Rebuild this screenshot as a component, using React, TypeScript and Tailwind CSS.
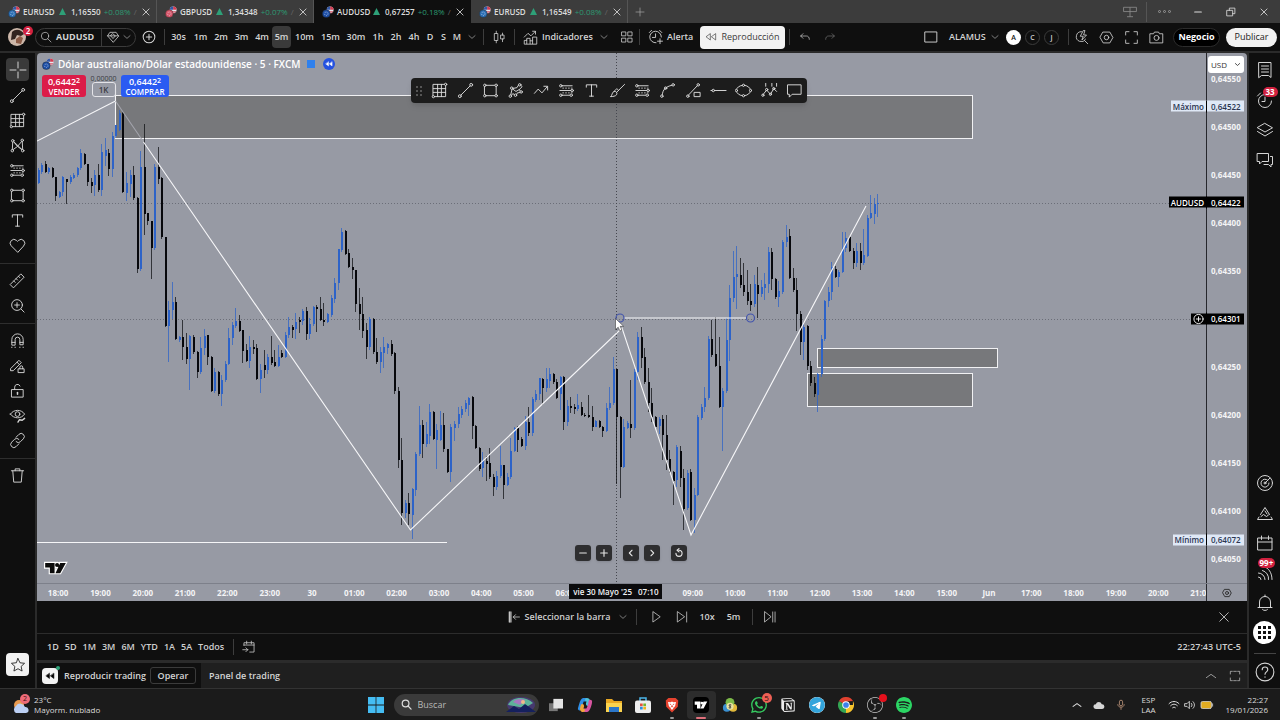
import type { ReactNode } from "react";
import { clsx } from "clsx";
import {
  SiBrave,
  SiNotion,
  SiObsstudio,
  SiSpotify,
  SiTelegram,
  SiWhatsapp,
} from "react-icons/si";

interface IconProps {
  size?: string;
  className?: string;
  children: ReactNode;
}

// Base para todos los iconos de línea (caja de 18x18)
function Icon({ size = "size-[18px]", className, children }: IconProps) {
  return (
    <svg
      viewBox="0 0 18 18"
      fill="none"
      stroke="currentColor"
      strokeWidth="1"
      strokeLinecap="round"
      strokeLinejoin="round"
      className={clsx("shrink-0", size, className)}
      aria-hidden="true"
    >
      {children}
    </svg>
  );
}

const icons: Record<string, ReactNode> = {
  cross: <path d="M9 1v6M9 11v6M1 9h6M11 9h6" />,
  trend: (
    <>
      <circle cx="3" cy="15" r="1.5" />
      <circle cx="15" cy="3" r="1.5" />
      <path d="M4.2 13.8 13.8 4.2" />
    </>
  ),
  grid: (
    <>
      <path d="M2.5 2.5h13v13h-13zM2.5 7h13M2.5 11h13M7 2.5v13M11 2.5v13" />
      <circle cx="2.5" cy="15.5" r="1.2" fill="#111" />
      <circle cx="15.5" cy="2.5" r="1.2" fill="#111" />
    </>
  ),
  pattern: (
    <>
      <path d="M3.5 14 4 4l5 6 5-6 .5 10L9 10l-5.500 4M4 4l10.500 10" />
      <circle cx="3.500" cy="14.500" r="1.300" fill="#111" />
      <circle cx="4" cy="4" r="1.300" fill="#111" />
      <circle cx="14" cy="3.500" r="1.300" fill="#111" />
      <circle cx="14.500" cy="14.500" r="1.300" fill="#111" />
    </>
  ),
  fib: (
    <>
      <path d="M4.500 4H15M2 9h11.500M4.500 14h8" />
      <path d="M5 6.500h10M5 11.500h10" strokeDasharray="1 2" strokeWidth=".8" />
      <circle cx="3" cy="4" r="1.300" />
      <circle cx="15" cy="9" r="1.300" />
      <circle cx="3" cy="14" r="1.300" />
      <circle cx="14" cy="14" r="1.300" fill="#111" />
    </>
  ),
  rect: (
    <>
      <path d="M3 3.500h12v11H3z" />
      <circle cx="3" cy="3.500" r="1.300" fill="#111" />
      <circle cx="15" cy="3.500" r="1.300" fill="#111" />
      <circle cx="3" cy="14.500" r="1.300" fill="#111" />
      <circle cx="15" cy="14.500" r="1.300" fill="#111" />
    </>
  ),
  text: <path d="M3.500 5.500V3h11v2.500M9 3v12M7 15h4" />,
  heart: (
    <path d="M9 16 2.300 9.300a4 4 0 0 1 5.600-5.700L9 4.700l1.100-1.100a4 4 0 0 1 5.600 5.700z" />
  ),
  ruler: <path d="m1.500 13 11-11 3.500 3.500-11 11zM5 9.500l1.500 1.500M7.500 7l1.500 1.500M10 4.500 11.500 6" />,
  zoomIn: (
    <>
      <circle cx="8.500" cy="8.500" r="5.700" />
      <path d="m12.800 12.800 3.200 3.200M8.500 6v5M6 8.500h5" />
    </>
  ),
  magnet: (
    <path d="M3 13.500V8a6 6 0 0 1 12 0v5.500h-3.500V8a2.500 2.500 0 0 0-5 0v5.500zM3 11h3.500M11.500 11H15M3 16v.5M6.500 16v.5M11.500 16v.5M15 16v.5" />
  ),
  pencilLock: (
    <path d="M2 12 10.500 3.500 13 6l-8.500 8.500H2zM8.500 5.500 11 8M10 12.500h6v4h-6zM11.500 12.500v-1.700a1.500 1.500 0 0 1 3 0v1.700" />
  ),
  lock: (
    <>
      <path d="M3 8h12v8H3zM6 8V5.500a3 3 0 0 1 5.700-1.300" />
      <path d="M9 11v2" strokeWidth="1.600" />
    </>
  ),
  eye: (
    <>
      <path d="M1.500 7.500c3.500-5.300 11.500-5.300 15 0-3.500 5.300-11.500 5.300-15 0z" />
      <circle cx="9" cy="7.500" r="2.500" />
      <path d="m9.500 16 1.500-2.500 3 .5 2.500-2" strokeWidth="1.500" />
    </>
  ),
  link: (
    <path d="m7.500 5.500 3-3a3.200 3.200 0 0 1 4.700 4.700l-3 3a3.200 3.200 0 0 1-4.700 0M10.500 12.500l-3 3a3.200 3.200 0 0 1-4.700-4.700l3-3a3.200 3.200 0 0 1 4.700 0" />
  ),
  trash: <path d="M2.500 4h13M4 4l1 12h8l1-12M6.500 4V2h5v2" />,
  star: (
    <path d="m9 1.700 2.200 4.800 5.200.6-3.900 3.500 1.100 5.200L9 13.200l-4.600 2.600 1.100-5.200L1.600 7.100l5.200-.6z" />
  ),
  search: (
    <>
      <circle cx="7.500" cy="7.500" r="5.500" />
      <path d="m11.500 11.500 5 5" />
    </>
  ),
  gem: <path d="m9 15.500-7-8L5 3h8l3 4.500zM2 7.500h14M6 7.500 9 11l3-3.500L9 5z" />,
  down: <path d="m3.500 6.500 5.500 5 5.500-5" />,
  up: <path d="m2 11.500 7-5 7 5" />,
  left: <path d="m11 4-5 5 5 5" />,
  right: <path d="m7 4 5 5-5 5" />,
  plus: <path d="M9 3v12M3 9h12" />,
  minus: <path d="M3 9h12" />,
  close: <path d="m3.500 3.500 11 11M14.500 3.500l-11 11" />,
  plusCircle: (
    <>
      <circle cx="9" cy="9" r="7.500" />
      <path d="M9 5.500v7M5.500 9h7" />
    </>
  ),
  candles: <path d="M3.500 4.500h4v9h-4zM5.500 1.500v3M5.500 13.500v3M11.500 6.500h4v5h-4zM13.500 4v2.500M13.500 11.500V15" />,
  indicators: (
    <path d="M1.500 16.500v-4h3v-2.500h4V13h3V8.500h5v8zM4.500 16.500V12M8.500 16.500V13M11.500 16.500V13M1.500 8.500 6 4l3.500 3L15 1.500M11.500 1.500H15V5" />
  ),
  layouts: (
    <path d="M2.500 2.500h5v5h-5zM10.500 2.500h5v5h-5zM2.500 10.500h5v5h-5zM10.500 10.500h5v5h-5z" />
  ),
  alarm: (
    <path d="M15 9A6.500 6.500 0 1 0 9 15.500M8.500 5.500v4H5M1.500 4 4 1.500M13 1.500 15.500 4M13.500 11v5.500M10.700 13.700h5.600" />
  ),
  rewind: <path d="M8 4.500v9L2 9zM16 4.500v9L10 9z" />,
  undo: <path d="M6 4 2.500 7.500 6 11M2.500 7.500H11c3 0 4.500 2 4.500 5" />,
  redo: <path d="m12 4 3.500 3.500L12 11M15.500 7.500H7c-3 0-4.500 2-4.500 5" />,
  window: <path d="M1.500 2.500h15v13h-15z" />,
  quick: (
    <path d="M9 2a6 6 0 1 0 5 9M12.500 12.500l4 4M11 1 7.500 7.500H11L9.500 12 15 6h-3.500L13 1z" />
  ),
  hex: (
    <>
      <path d="M5 2.500h8L16.700 9 13 15.500H5L1.300 9z" />
      <circle cx="9" cy="9" r="2.700" />
    </>
  ),
  fullscreen: <path d="M2 6V2h4M12 2h4v4M16 12v4h-4M6 16H2v-4" />,
  camera: (
    <>
      <path d="M1.500 4.500h4l1-2h5l1 2h4v11h-15z" />
      <circle cx="9" cy="9.500" r="3" />
    </>
  ),
  list: <path d="M3 1.500h12v15l-2.500-2H5.500L3 16.500zM5.500 5h7M5.500 8h7M5.500 11h7" />,
  clock: <path d="M15.500 10A6.500 6.500 0 1 1 9 3.500M9 6v4.500H6M1.500 5 4.500 2" />,
  layers: <path d="m9 2.500 7.500 4.300L9 11 1.500 6.800zM1.500 10.500 9 15l7.500-4.500" />,
  chat: <path d="M1.500 2.500h11v8H6l-2.500 2.500v-2.500h-2zM14.500 5.500h2v8h-1.500V16l-2.500-2.500H8" />,
  target: (
    <>
      <circle cx="9" cy="9" r="7.500" />
      <path d="M12 6.500A4 4 0 1 0 13 9M9 9l5-5" />
      <circle cx="9" cy="9" r="1" />
    </>
  ),
  idea: <path d="M4.500 10.500 9 3.500l4.500 7M3 13l-1.500 2.500h15L15 13M5 12.500l2.500-2 3 2 2-1.500M9 7l2 3" />,
  calendar: <path d="M2 4h14v12H2zM2 8h14M5.500 2v3.500M12.500 2v3.500" />,
  feed: <path d="M2.500 13a2.500 2.500 0 0 1 2.500 2.500M2.500 9A6.500 6.500 0 0 1 9 15.500M6.500 6.500a8 8 0 0 1 6 9M10 3.500c4 2 6 7 6 12" />,
  bell: <path d="M2 13.500h14M3.500 13.500V8a5.500 5.500 0 0 1 11 0v5.500M6.500 15.500c1 1.300 4 1.300 5 0M9 1v1.500" />,
  help: (
    <>
      <circle cx="9" cy="9" r="8" />
      <path d="M6.500 7c0-3.300 5-3.300 5 0 0 2-2.500 1.800-2.500 4M9 13.300v.4" />
    </>
  ),
  play: <path d="M5 2.500v13L14 9z" />,
  step: <path d="M3 2.500v13L12 9zM15 2.500v13" />,
  toEnd: <path d="M2 2.500v13L10 9zM12.500 2.500v13M15.500 2.500v13" />,
  reset: <path d="M9 4a5.500 5.500 0 1 1-5.500 5.500M9 1 5.500 4 9 7" />,
  goto: <path d="M2.500 7V3.500h13v12H10M2.500 6.500h13M6 1.500v3.500M12 1.500v3.500M1 12.500h6.500M5 10l2.500 2.500L5 15" />,
  pitchfork: (
    <>
      <path d="M3.500 15.500 5.500 7l5-1 2.500-4 3 3-3 3 2 3-4 .5-1.500 3-3-2zM5.500 7l4 3 3.500-2" />
      <circle cx="3.500" cy="15" r="1.300" fill="#1c1c1c" />
      <circle cx="5" cy="6.500" r="1.300" fill="#1c1c1c" />
      <circle cx="13.500" cy="3" r="1.300" fill="#1c1c1c" />
      <circle cx="15" cy="10.500" r="1.300" fill="#1c1c1c" />
      <circle cx="9" cy="14" r="1.300" fill="#1c1c1c" />
    </>
  ),
  zigzag: <path d="m1.500 12 4-4.500 4 4L15 5M11.500 4.500H15.500V8.500" />,
  brush: <path d="M2 15.500c1.500-1 1-5 3.500-5.500S9 12 8 13.500s-4 2-6 2zM8 11l8.500-8.500M5.500 10C8 6 9 7 10 9" />,
  curve: (
    <>
      <path d="M3.500 13.500C4 8 7 5 13.500 3.500" />
      <circle cx="3" cy="15" r="1.300" />
      <circle cx="7" cy="6.500" r="1.300" />
      <circle cx="15" cy="3" r="1.300" />
    </>
  ),
  trendBox: (
    <>
      <path d="M3.500 14 13 4M10 11h6v4.500h-6z" />
      <circle cx="3" cy="15" r="1.300" />
      <circle cx="14" cy="3" r="1.300" />
    </>
  ),
  ray: (
    <>
      <path d="M1 9h1M5 9h12" />
      <circle cx="3.500" cy="9" r="1.300" />
    </>
  ),
  ellipse: (
    <>
      <ellipse cx="9" cy="9" rx="7.500" ry="5.500" />
      <circle cx="1.500" cy="9" r="1.200" fill="#1c1c1c" />
      <circle cx="16.500" cy="9" r="1.200" fill="#1c1c1c" />
      <circle cx="9" cy="3.500" r="1.200" fill="#1c1c1c" />
      <circle cx="9" cy="14.500" r="1.200" fill="#1c1c1c" />
    </>
  ),
  waves: (
    <>
      <path d="m2 13.500 4-5 4 4.500 3.500-6 3 3M5 1.500v3M11.500 1.500v3M16.500 1.500v3" />
      <circle cx="2" cy="14" r="1.200" />
      <circle cx="6" cy="8" r="1.200" />
      <circle cx="10" cy="13" r="1.200" />
      <circle cx="13.500" cy="7" r="1.200" />
    </>
  ),
  note: <path d="M2 3h14v10H6.500L3.500 16v-3H2z" />,
};

/* ---------- Pestañas ---------- */

const tabs = [
  { symbol: "EURUSD", price: "1,16550", change: "+0.08%", flag: "#2b6fb5" },
  { symbol: "GBPUSD", price: "1,34348", change: "+0.07%", flag: "#d9576b" },
  { symbol: "AUDUSD", price: "0,67257", change: "+0.18%", flag: "#1d4fa8", active: true },
  { symbol: "EURUSD", price: "1,16549", change: "+0.08%", flag: "#2b6fb5" },
];

function PairFlag({ color }: { color: string }) {
  return (
    <svg viewBox="0 0 14 14" className="size-3 shrink-0" aria-hidden="true">
      <circle cx="9.500" cy="4.500" r="4" fill="#e8e8ee" />
      <path d="M9.500.5a4 4 0 0 1 4 4h-4z" fill="#d43c50" />
      <path d="M6 6.500h7M7 8h5" stroke="#d43c50" strokeWidth=".8" />
      <path d="M5.500 4.500a4 4 0 0 1 4-4v4z" fill="#3559a8" />
      <circle cx="5" cy="9" r="4.500" fill={color} stroke="#222" strokeWidth=".5" />
      <circle cx="5" cy="9" r="2" fill="none" stroke="#dfe6f2" strokeWidth=".8" strokeDasharray="1 1.200" />
    </svg>
  );
}

function TabBar() {
  return (
    <header className="flex h-[23px] shrink-0 items-stretch bg-[#3c3c3c] text-[8px] text-[#dcdcdc]">
      {tabs.map((tab, i) => (
        <div
          key={i}
          className={clsx(
            "flex w-[157px] shrink-0 items-center border-r pr-[5px] pl-2",
            tab.active ? "border-[#0f0f0f] bg-[#0f0f0f]" : "border-[#555]"
          )}
        >
          <button className="flex flex-1 items-center gap-[3px] whitespace-nowrap">
            <PairFlag color={tab.flag} />
            <span className="w-[33px] text-left font-semibold">{tab.symbol}</span>
            <svg viewBox="0 0 8 8" className="mr-0.5 size-[7px] shrink-0 fill-[#2ea078]" aria-hidden="true">
              <path d="m4 0 4 8H0z" />
            </svg>
            <span className="font-semibold">{tab.price}</span>
            <span className="text-[#2c9a72]">{tab.change}</span>
            <span className="text-[#666]">/</span>
          </button>
          <button aria-label="Cerrar pestaña">
            <Icon size="size-2.5" className="stroke-[1.5]">{icons.close}</Icon>
          </button>
        </div>
      ))}
      <button aria-label="Nueva pestaña" className="flex w-6 items-center justify-center text-[#aaa]">
        <Icon size="size-3">{icons.plus}</Icon>
      </button>
      <div className="ml-auto flex items-center">
        <button aria-label="Ventanas" className="flex w-8 justify-center text-[#8a8a8a]">
          <svg viewBox="0 0 18 14" className="h-3 w-4" fill="none" stroke="currentColor">
            <path d="M1.500 1.500h15v5h-15zM9 1.500v11M5.500 12.500h7" />
          </svg>
        </button>
        <span className="h-5 w-px bg-[#555]" />
        <button aria-label="Más" className="flex w-[34px] justify-center gap-[2px]">
          {[0, 1, 2].map((n) => (
            <span key={n} className="size-[3px] rounded-full border border-[#999]" />
          ))}
        </button>
        <button aria-label="Minimizar" className="flex w-[33px] justify-center">
          <Icon size="size-2.5" className="stroke-[2]">{icons.minus}</Icon>
        </button>
        <button aria-label="Restaurar" className="flex w-[33px] justify-center">
          <Icon size="size-2.5" className="stroke-[1.5]">
            <path d="M2 6h10v10H2zM6 6V2h10v10h-4" />
          </Icon>
        </button>
        <button aria-label="Cerrar" className="flex w-[33px] justify-center">
          <Icon size="size-2.5" className="stroke-[1.5]">{icons.close}</Icon>
        </button>
      </div>
    </header>
  );
}

/* ---------- Barra superior ---------- */

const intervals = [
  { label: "30s", width: "w-[23px]" },
  { label: "1m", width: "w-[21px]" },
  { label: "2m", width: "w-[20px]" },
  { label: "3m", width: "w-[21px]" },
  { label: "4m", width: "w-[20px]" },
  { label: "5m", width: "w-[19px]" },
  { label: "10m", width: "w-[27px]" },
  { label: "15m", width: "w-[25px]" },
  { label: "30m", width: "w-[26px]" },
  { label: "1h", width: "w-[18px]" },
  { label: "2h", width: "w-[18px]" },
  { label: "4h", width: "w-[18px]" },
  { label: "D", width: "w-[14px]" },
  { label: "S", width: "w-[13px]" },
  { label: "M", width: "w-[14px]" },
];

function Separator() {
  return <span className="h-4 w-px shrink-0 bg-[#3d3d3d]" />;
}

function TopToolbar() {
  return (
    <div className="flex h-7 shrink-0 items-center overflow-hidden bg-[#0f0f0f] text-[9px] font-semibold text-[#d4d4d4]">
      <button aria-label="Perfil" className="relative ml-2 size-[18px] shrink-0 rounded-full">
        <svg viewBox="0 0 18 18" className="size-[18px]" aria-hidden="true">
          <circle cx="9" cy="9" r="9" fill="#cdb8aa" />
          <path d="M4 4c4-4 10-2 12 2l-3 2-4-1-2 4-4 1z" fill="#33241f" />
          <path d="m8 11 4-3 3 2-2 6-5-1z" fill="#8d5d48" />
        </svg>
        <span className="absolute -top-0.5 left-[15px] flex size-2.5 items-center justify-center rounded-full bg-[#d2213f] text-[8px] leading-none text-white">
          2
        </span>
      </button>
      <div className="ml-[9px] flex h-[19px] shrink-0 items-center rounded-full border border-[#3b3b3b]">
        <button className="flex items-center gap-1 pl-1">
          <Icon size="size-3">{icons.search}</Icon>
          <span className="w-[45px] text-left font-bold">AUDUSD</span>
        </button>
        <span className="h-[17px] w-px bg-[#3b3b3b]" />
        <button aria-label="Gema" className="flex w-[33px] items-center justify-center gap-0.5">
          <Icon size="size-3.5">{icons.gem}</Icon>
          <Icon size="size-2.5">{icons.down}</Icon>
        </button>
      </div>
      <button aria-label="Comparar" className="mr-2 ml-1.5 shrink-0">
        <Icon size="size-3.5" className="stroke-[1.3]">{icons.plusCircle}</Icon>
      </button>
      <Separator />
      <div className="ml-0.5 flex items-center">
        {intervals.map(({ label, width }) => (
          <button
            key={label}
            className={clsx("h-[22px] shrink-0 rounded", width, label === "5m" && "bg-[#3a3a3a]")}
          >
            {label}
          </button>
        ))}
        <button aria-label="Más intervalos" className="flex w-4 justify-center">
          <Icon size="size-2.5">{icons.down}</Icon>
        </button>
      </div>
      <span className="w-[3px]" />
      <Separator />
      <button aria-label="Velas" className="flex w-[30px] shrink-0 justify-center">
        <Icon size="size-3.5">{icons.candles}</Icon>
      </button>
      <Separator />
      <button className="flex shrink-0 items-center gap-1 pl-2">
        <Icon size="size-[15px]">{icons.indicators}</Icon>
        <span className="w-[52px] text-left">Indicadores</span>
      </button>
      <button aria-label="Favoritos" className="flex w-5 justify-center">
        <Icon size="size-2.5">{icons.down}</Icon>
      </button>
      <button aria-label="Plantillas" className="flex w-[25px] justify-center">
        <Icon size="size-3.5">{icons.layouts}</Icon>
      </button>
      <Separator />
      <button className="flex shrink-0 items-center gap-[3px] pl-2">
        <Icon size="size-4">{icons.alarm}</Icon>
        <span className="w-[33px] text-left">Alerta</span>
      </button>
      <button className="flex h-[23px] w-[85px] shrink-0 items-center justify-center gap-1 rounded bg-[#f2f2f2] font-medium text-[#3c3c3c]">
        <Icon size="size-3">{icons.rewind}</Icon>
        Reproducción
      </button>
      <span className="w-1" />
      <Separator />
      <button aria-label="Deshacer" className="flex w-[30px] justify-center">
        <Icon size="size-3">{icons.undo}</Icon>
      </button>
      <button aria-label="Rehacer" className="flex w-5 justify-center text-[#777]">
        <Icon size="size-3">{icons.redo}</Icon>
      </button>

      <div className="ml-auto flex shrink-0 items-center pr-[3px]">
        <button aria-label="Diseño" className="flex w-[25px] justify-start">
          <Icon size="size-3.5" className="stroke-[1.2]">{icons.window}</Icon>
        </button>
        <button className="w-[37px] text-left">ALAMUS</button>
        <button aria-label="Diseños guardados" className="flex w-[18px] justify-center">
          <Icon size="size-2.5">{icons.down}</Icon>
        </button>
        {["A", "C", "J"].map((letter) => (
          <button
            key={letter}
            className={clsx(
              "mx-0.5 flex size-[15px] items-center justify-center rounded-full text-[7px] leading-none",
              letter === "A" ? "bg-white text-[#111]" : "border border-[#3b3b3b]"
            )}
          >
            {letter}
          </button>
        ))}
        <span className="w-[7px]" />
        <Separator />
        {["quick", "hex", "fullscreen", "camera"].map((name) => (
          <button key={name} aria-label={name} className="flex w-[25px] justify-center">
            <Icon size="size-[15px]">{icons[name]}</Icon>
          </button>
        ))}
        <button className="ml-1 h-[19px] w-[47px] rounded-full border border-[#2c2c2c] bg-black font-bold text-white">
          Negocio
        </button>
        <button className="ml-1.5 h-[19px] w-[51px] rounded-full bg-[#f2f2f2] font-medium text-[#222]">
          Publicar
        </button>
      </div>
    </div>
  );
}

/* ---------- Barras laterales ---------- */

const drawingGroups = [
  ["trend", "grid", "pattern", "fib", "rect", "text", "heart"],
  ["ruler", "zoomIn"],
  ["magnet", "pencilLock", "lock", "eye", "link"],
  ["trash"],
];

function DrawingSidebar() {
  return (
    <nav className="flex w-[35px] shrink-0 flex-col items-center bg-[#0f0f0f] pt-[5px] text-[#d4d4d4]">
      <button aria-label="Cruz" className="mb-0.5 flex size-[23px] items-center justify-center rounded bg-[#3a3a3a]">
        <Icon>{icons.cross}</Icon>
      </button>
      {drawingGroups.map((group, i) => (
        <div
          key={i}
          className={clsx(
            "flex w-full flex-col items-center",
            i > 0 && "mt-[5px] border-t border-[#2e2e2e] pt-1"
          )}
        >
          {group.map((name) => (
            <button key={name} aria-label={name} className="flex h-[25px] items-center">
              <Icon size="size-[17px]">{icons[name]}</Icon>
            </button>
          ))}
        </div>
      ))}
      <button
        aria-label="Favoritos"
        className="mt-auto mb-3 flex size-[23px] items-center justify-center rounded bg-[#f2f2f2] text-[#222]"
      >
        <Icon size="size-4">{icons.star}</Icon>
      </button>
    </nav>
  );
}

function WidgetSidebar() {
  return (
    <aside className="flex w-[31px] shrink-0 flex-col items-center bg-[#0f0f0f] pt-0.5 text-[#d4d4d4]">
      {["list", "clock", "layers", "chat"].map((name) => (
        <button key={name} aria-label={name} className="relative my-[6px] shrink-0">
          <Icon>{icons[name]}</Icon>
          {name === "clock" && (
            <span className="absolute -top-1 left-[7px] rounded-full bg-[#d2213f] px-[3px] text-[8px] leading-[10px] font-bold text-white">
              33
            </span>
          )}
        </button>
      ))}
      <div className="mt-auto flex flex-col items-center">
        {["target", "idea", "calendar", "feed", "bell"].map((name) => (
          <button key={name} aria-label={name} className="relative my-[6px] shrink-0">
            <Icon>{icons[name]}</Icon>
            {name === "feed" && (
              <span className="absolute -top-1.5 left-0.5 rounded-full bg-[#d2213f] px-0.5 text-[8px] leading-[10px] font-bold text-white">
                99+
              </span>
            )}
          </button>
        ))}
        <button
          aria-label="Productos"
          className="my-[3px] flex size-[23px] items-center justify-center rounded-full bg-white text-[#111]"
        >
          <svg viewBox="0 0 13 13" className="size-[13px]" fill="currentColor" aria-hidden="true">
            <path d="M0 0h3v3H0zM5 0h3v3H5zM10 0h3v3h-3zM0 5h3v3H0zM5 5h3v3H5zM10 5h3v3h-3zM0 10h3v3H0zM5 10h3v3H5zM10 10h3v3h-3z" />
          </svg>
        </button>
        <span className="mt-1.5 h-px w-[22px] bg-[#444]" />
        <button aria-label="Ayuda" className="mt-2 mb-1.5">
          <Icon size="size-5">{icons.help}</Icon>
        </button>
      </div>
    </aside>
  );
}

/* ---------- Gráfico ---------- */

// Velas de 5 minutos: máximo, techo del cuerpo, base del cuerpo, mínimo (1 = alcista)
const candles: number[][] = [
  [168, 170, 183, 184, 1], [163, 165, 172, 174, 1], [161, 164, 172, 173, 0], [167, 168, 172, 174, 1],
  [167, 168, 177, 178, 0], [177, 177, 196, 201, 0], [191, 192, 197, 198, 1], [176, 177, 192, 196, 1],
  [179, 179, 182, 204, 0], [175, 177, 182, 184, 1], [173, 175, 178, 179, 1], [167, 168, 175, 177, 1],
  [149, 153, 168, 170, 1], [153, 154, 164, 165, 0], [164, 164, 182, 186, 0], [178, 182, 186, 193, 0],
  [170, 175, 185, 196, 1], [164, 175, 190, 192, 0], [144, 152, 190, 196, 1], [138, 150, 156, 166, 1],
  [149, 153, 169, 176, 0], [132, 136, 169, 177, 1], [125, 125, 136, 138, 1], [110, 113, 130, 131, 1],
  [112, 113, 192, 193, 0], [172, 183, 193, 201, 1], [170, 175, 184, 197, 1], [166, 175, 198, 200, 0],
  [197, 198, 269, 273, 0], [151, 167, 269, 271, 1], [124, 167, 214, 235, 0], [213, 213, 221, 225, 0],
  [221, 221, 248, 279, 0], [164, 167, 248, 250, 1], [147, 167, 179, 184, 0], [177, 178, 237, 239, 0],
  [237, 237, 326, 327, 0], [301, 310, 326, 362, 1], [282, 302, 310, 319, 1], [297, 302, 339, 340, 0],
  [336, 337, 340, 342, 1], [320, 337, 347, 360, 0], [333, 347, 359, 364, 0], [335, 336, 359, 390, 1],
  [335, 337, 352, 354, 0], [351, 352, 372, 378, 0], [337, 348, 372, 374, 1], [329, 336, 348, 355, 1],
  [335, 335, 357, 365, 0], [356, 357, 391, 392, 0], [368, 372, 391, 393, 1], [371, 372, 394, 396, 0],
  [375, 380, 394, 406, 1], [361, 364, 380, 382, 1], [328, 338, 364, 365, 1], [322, 325, 338, 345, 1],
  [308, 321, 326, 328, 1], [315, 321, 331, 332, 0], [330, 330, 351, 363, 0], [344, 350, 361, 362, 0],
  [336, 347, 361, 368, 1], [340, 347, 349, 354, 0], [344, 348, 379, 380, 0], [364, 370, 379, 393, 1],
  [350, 365, 370, 378, 0], [354, 357, 370, 374, 1], [336, 357, 363, 365, 0], [350, 362, 366, 367, 0],
  [345, 357, 366, 367, 1], [350, 353, 357, 358, 0], [332, 335, 357, 358, 1], [317, 327, 335, 338, 1],
  [325, 327, 330, 338, 0], [313, 322, 329, 339, 1], [317, 320, 322, 333, 0], [309, 311, 321, 325, 1],
  [307, 311, 334, 340, 0], [318, 324, 334, 339, 1], [306, 307, 324, 326, 1], [305, 307, 309, 332, 0],
  [297, 309, 320, 321, 0], [303, 320, 322, 326, 0], [313, 314, 322, 323, 1], [295, 298, 315, 317, 1],
  [278, 283, 299, 303, 1], [249, 249, 283, 290, 1], [228, 232, 250, 252, 1], [230, 231, 254, 255, 0],
  [249, 253, 267, 268, 0], [258, 267, 270, 279, 0], [270, 270, 304, 312, 0], [288, 304, 314, 330, 0],
  [297, 314, 331, 338, 0], [323, 330, 347, 359, 0], [317, 319, 347, 350, 1], [318, 319, 352, 354, 0],
  [338, 352, 362, 364, 0], [347, 352, 362, 373, 1], [337, 347, 353, 368, 1], [343, 344, 348, 354, 1],
  [340, 344, 354, 356, 0], [352, 353, 391, 394, 0], [387, 391, 460, 468, 0], [438, 460, 513, 525, 0],
  [500, 503, 513, 518, 1], [493, 503, 514, 525, 0], [488, 489, 515, 539, 1], [452, 454, 490, 496, 1],
  [406, 425, 454, 456, 1], [420, 425, 444, 458, 0], [422, 434, 444, 447, 1], [404, 412, 436, 444, 1],
  [411, 412, 439, 440, 0], [424, 430, 440, 469, 1], [411, 425, 440, 441, 1], [413, 425, 449, 452, 0],
  [449, 449, 472, 473, 0], [424, 427, 472, 482, 1], [421, 424, 428, 441, 1], [407, 414, 424, 428, 1],
  [406, 409, 415, 418, 1], [400, 403, 409, 412, 1], [397, 398, 405, 416, 1], [396, 397, 426, 439, 0],
  [425, 426, 448, 449, 0], [447, 448, 469, 471, 0], [452, 460, 468, 477, 1], [456, 461, 464, 481, 0],
  [448, 463, 477, 479, 0], [474, 477, 487, 496, 0], [471, 476, 487, 490, 1], [446, 465, 476, 478, 1],
  [465, 465, 485, 499, 0], [473, 477, 485, 486, 1], [438, 451, 477, 479, 1], [427, 428, 451, 452, 1],
  [426, 428, 440, 452, 0], [437, 439, 446, 447, 0], [416, 422, 446, 450, 1], [407, 422, 433, 436, 0],
  [397, 399, 433, 436, 1], [390, 394, 400, 402, 1], [378, 378, 394, 400, 1], [378, 379, 388, 405, 0],
  [368, 379, 388, 392, 1], [368, 374, 381, 388, 1], [373, 374, 382, 384, 0], [379, 382, 398, 399, 0],
  [376, 377, 394, 410, 1], [376, 377, 422, 430, 0], [400, 406, 422, 426, 1], [397, 406, 408, 413, 0],
  [404, 407, 409, 414, 0], [394, 405, 409, 411, 1], [402, 407, 415, 416, 0], [413, 415, 416, 417, 0],
  [395, 415, 417, 418, 0], [406, 417, 427, 431, 0], [420, 421, 427, 427, 1], [420, 421, 427, 428, 0],
  [426, 427, 431, 437, 0], [403, 408, 431, 432, 1], [387, 403, 408, 410, 1], [357, 369, 403, 405, 1],
  [369, 369, 417, 484, 0], [416, 417, 467, 498, 0], [419, 427, 467, 468, 1], [421, 423, 428, 429, 1],
  [380, 424, 428, 438, 0], [369, 372, 428, 430, 1], [332, 337, 372, 380, 1], [327, 337, 358, 368, 0],
  [348, 357, 382, 384, 0], [368, 382, 403, 412, 0], [388, 403, 417, 422, 0], [416, 417, 427, 427, 0],
  [417, 419, 426, 434, 1], [415, 419, 435, 460, 0], [415, 435, 460, 470, 0], [450, 459, 472, 473, 0],
  [471, 472, 481, 505, 0], [445, 447, 480, 487, 1], [446, 451, 478, 487, 0], [469, 478, 509, 530, 0],
  [470, 473, 508, 510, 1], [469, 472, 520, 521, 0], [488, 495, 520, 533, 1], [415, 417, 495, 496, 1],
  [404, 407, 418, 420, 1], [387, 398, 407, 412, 1], [336, 339, 398, 400, 1], [320, 339, 355, 357, 0],
  [317, 354, 366, 367, 0], [337, 366, 407, 408, 0], [388, 391, 407, 451, 1], [318, 340, 391, 393, 1],
  [285, 298, 340, 361, 1], [251, 277, 298, 302, 1], [246, 274, 277, 309, 1], [258, 275, 285, 288, 0],
  [263, 285, 292, 296, 0], [270, 292, 301, 305, 0], [284, 301, 305, 311, 0], [275, 284, 304, 307, 1],
  [267, 285, 294, 318, 0], [280, 287, 294, 297, 1], [273, 284, 288, 300, 1], [247, 252, 284, 293, 1],
  [248, 252, 279, 290, 0], [278, 279, 297, 299, 0], [281, 291, 297, 307, 1], [240, 242, 292, 294, 1],
  [225, 237, 242, 247, 1], [229, 236, 278, 279, 0], [268, 278, 290, 292, 0], [278, 290, 314, 331, 0],
  [311, 314, 342, 355, 0], [323, 327, 342, 360, 1], [325, 326, 366, 370, 0], [361, 366, 383, 386, 0],
  [377, 383, 394, 397, 0], [373, 374, 395, 412, 1], [335, 339, 374, 377, 1], [300, 301, 339, 341, 1],
  [287, 292, 301, 307, 1], [262, 267, 292, 300, 1], [266, 269, 277, 278, 0], [270, 272, 277, 287, 1],
  [232, 248, 272, 273, 1], [232, 238, 248, 252, 1], [236, 237, 251, 252, 0], [248, 251, 263, 269, 0],
  [243, 251, 263, 267, 1], [243, 251, 263, 270, 0], [229, 255, 263, 265, 1], [215, 218, 256, 257, 1],
  [195, 213, 218, 219, 1], [198, 204, 214, 224, 1], [194, 203, 204, 217, 1],
];

const zones = [
  { x: 115.5, y: 95.5, w: 857, h: 43 },
  { x: 817.5, y: 348.5, w: 180, h: 19 },
  { x: 807.5, y: 373.5, w: 165, h: 33 },
];

function Candles() {
  return (
    <g>
      {candles.map(([high, top, bottom, low, up], i) => {
        const x = Math.round(37.8 + i * 3.527);
        return (
          <g key={i} fill={up ? "#2d63c8" : "#07080c"}>
            <rect x={x} y={high} width="1" height={low - high} opacity={up ? 0.75 : 0.7} />
            <rect x={x} y={top} width="2" height={Math.max(1, bottom - top)} />
          </g>
        );
      })}
    </g>
  );
}

function ChartCanvas() {
  return (
    <svg
      viewBox="37 53 1169 530"
      preserveAspectRatio="none"
      className="absolute inset-0 h-full w-full"
      role="img"
      aria-label="Gráfico AUDUSD 5 minutos"
    >
      {zones.map((z) => (
        <rect key={z.x} x={z.x} y={z.y} width={z.w} height={z.h} fill="#77787b" stroke="#f1f1f3" />
      ))}
      <g stroke="#6b6e78" strokeDasharray="1 2">
        <path d="M37 203.500h1169M37 319.500h1169" />
        <path d="M616.500 53v530" stroke="#45474f" />
      </g>
      <Candles />
      <g fill="none" stroke="#f6f6f8" strokeWidth="1.100">
        <path d="m37 141 78.500-40M115.500 86v39" />
        <path d="m115.500 101 28 41" stroke="#a3a4ac" />
        <path d="M143.500 142 410.500 530 622 328 691 535 866 206" />
        <path d="M37 542.500h410M624 318h122" />
      </g>
      <g fill="none" stroke="#4254ad" strokeWidth="1.200">
        <circle cx="620" cy="318" r="4" />
        <circle cx="750.500" cy="318" r="4" />
      </g>
      <path d="M615.500 318.500v11l2.700-2.300 1.700 3.800 2-1-1.700-3.700h3.400z" fill="#fff" stroke="#222" strokeWidth=".5" />
    </svg>
  );
}

const favoriteTools = [
  "grid", "trend", "rect", "pitchfork", "zigzag", "fib", "text", "brush",
  "fib", "curve", "trendBox", "ray", "ellipse", "waves", "note",
];

function FloatingToolbar() {
  return (
    <div className="absolute top-[25px] left-[32%] flex h-[25px] w-[396px] items-center rounded bg-[#1c1c1c] text-[#dcdcdc] shadow-md">
      <div className="grid grid-cols-2 gap-[2px] px-[5px]">
        {Array.from({ length: 6 }, (_, n) => (
          <span key={n} className="size-[2px] bg-[#555]" />
        ))}
      </div>
      {favoriteTools.map((name, i) => (
        <button key={i} aria-label={name} className="flex flex-1 justify-center">
          <Icon size="size-[17px]">{icons[name]}</Icon>
        </button>
      ))}
    </div>
  );
}

function ChartLegend() {
  return (
    <div className="absolute top-[3px] left-[5px] text-white">
      <div className="flex items-center gap-0.5 text-[10px] leading-4 font-semibold">
        <PairFlag color="#1d4fa8" />
        <h1 className="ml-0.5">Dólar australiano/Dólar estadounidense · 5 · FXCM</h1>
        <span className="ml-1 h-2 w-2 bg-[#2f80ed]" />
        <span className="ml-1.5 flex size-3 items-center justify-center rounded-full bg-[#2451e0]">
          <Icon size="size-2" className="fill-white">{icons.rewind}</Icon>
        </span>
      </div>
      <div className="mt-[3px] flex items-start gap-[5px] text-center text-[9px] leading-[11px] font-semibold">
        <button className="h-[22px] w-11 rounded-[3px] bg-[#dc1c48]">
          0,6442<sup className="top-[-2px] text-[7px]">2</sup>
          <span className="block text-[8px] leading-[9px]">VENDER</span>
        </button>
        <div className="flex w-[25px] flex-col items-center text-[#3a3b42]">
          <span className="text-[7px] leading-[7px] font-normal">0,00000</span>
          <button className="h-[15px] w-6 rounded-[3px] border border-[#e4e4e8] text-[8px] leading-3">1K</button>
        </div>
        <button className="h-[22px] w-12 rounded-[3px] bg-[#2a5bf2]">
          0,6442<sup className="top-[-2px] text-[7px]">2</sup>
          <span className="block text-[8px] leading-[9px]">COMPRAR</span>
        </button>
      </div>
    </div>
  );
}

function ChartNavButtons() {
  const groups = [["minus", "plus"], ["left", "right"], ["reset"]];
  return (
    <div className="absolute bottom-[22px] left-[46%] flex gap-[11px] text-[#e6e6e6]">
      {groups.map((group, i) => (
        <div key={i} className="flex gap-[5px]">
          {group.map((name) => (
            <button
              key={name}
              aria-label={name}
              className="flex size-4 items-center justify-center rounded-[3px] bg-[#2e2e30] shadow"
            >
              <Icon size="size-2.5" className="stroke-[2]">{icons[name]}</Icon>
            </button>
          ))}
        </div>
      ))}
    </div>
  );
}

const prices = [
  "0,64550", "0,64500", "0,64450", "0,64400", "0,64350", "",
  "0,64250", "0,64200", "0,64150", "0,64100", "0,64050",
];

const priceTags = [
  { name: "Máximo", value: 0.64522, tone: "light" },
  { name: "AUDUSD", value: 0.64422, tone: "dark" },
  { name: "", value: 0.64301, tone: "dark" },
  { name: "Mínimo", value: 0.64072, tone: "light" },
];

function PriceTags() {
  return (
    <>
      {priceTags.map(({ name, value, tone }) => (
        <div
          key={value}
          className={clsx(
            "absolute right-[3px] flex h-[11px] -translate-y-1/2 items-center text-[8px] font-semibold",
            tone === "dark" ? "bg-black text-white" : "bg-[#dfe8f6] text-[#2a3550]"
          )}
          style={{ top: `${((0.64577 - value) / 0.0055) * 100}%` }}
        >
          {name ? (
            <span className="px-0.5">{name}</span>
          ) : (
            <span className="px-0.5">
              <Icon size="size-[11px]" className="stroke-[1.500]">{icons.plusCircle}</Icon>
            </span>
          )}
          <span className="w-[38px] border-l border-black pl-1">{value.toString().replace(".", ",")}</span>
        </div>
      ))}
    </>
  );
}

// Las 07:00 y 08:00 quedan bajo la etiqueta del cursor
const hours = [
  "18:00", "19:00", "20:00", "21:00", "22:00", "23:00", "30", "01:00", "02:00", "03:00",
  "04:00", "05:00", "06:00", "", "", "09:00", "10:00", "11:00", "12:00", "13:00",
  "14:00", "15:00", "Jun", "17:00", "18:00", "19:00", "20:00", "21:00",
];

function TradingViewMark({ className }: { className?: string }) {
  return (
    <svg viewBox="0 0 24 14" className={className} aria-hidden="true">
      <path d="M1 1h10v12H5V6.500H1zM16.500 13h-5.300L16.500 1H23z" fill="currentColor" />
      <circle cx="13.500" cy="3.600" r="2.500" fill="currentColor" />
    </svg>
  );
}

function Chart() {
  return (
    <section className="flex min-h-[420px] flex-1 flex-col overflow-hidden rounded-t bg-[#979aa4]">
      <div className="relative flex flex-1">
        <div className="relative flex-1 overflow-hidden">
          <ChartCanvas />
          <ChartLegend />
          <FloatingToolbar />
          <ChartNavButtons />
          <span className="absolute bottom-[7px] left-1.5">
            <svg viewBox="0 0 26 16" className="h-[15px] w-[25px]" aria-hidden="true">
              <path
                d="M2 2h10v11H7V7H2zM18 13h-5l5-11h6zM12.500 4.300a2.200 2.200 0 1 0 4.400 0 2.200 2.200 0 0 0-4.400 0z"
                fill="#0a0a0a"
                stroke="#fff"
                strokeWidth="2.500"
                paintOrder="stroke"
              />
            </svg>
          </span>
        </div>
        <div className="flex w-[41px] flex-col border-l border-[#26272c] pt-0.5 text-[8px] font-bold text-[#f4f4f6]">
          {prices.map((price, i) => (
            <span key={i} className="flex flex-1 items-center pl-1">{price}</span>
          ))}
        </div>
        <select
          aria-label="Moneda"
          className="absolute top-[3px] right-[3px] h-[17px] w-9 appearance-none rounded-[3px] bg-white pl-[3px] text-[8px] text-[#333]"
        >
          <option>USD</option>
        </select>
        <span className="pointer-events-none absolute top-2 right-1.5 text-[#222]">
          <Icon size="size-[7px]" className="stroke-[2]">{icons.down}</Icon>
        </span>
        <PriceTags />
      </div>
      <div className="relative flex h-[18px] shrink-0 border-t border-[#7d808a] text-[8px] font-bold text-[#f4f4f6]">
        <div className="flex min-w-0 flex-1 items-center overflow-hidden">
          {hours.map((hour, i) => (
            <span key={i} className="w-[3.62%] shrink-0 text-center">{hour}</span>
          ))}
        </div>
        <div className="flex w-[41px] items-center justify-center border-l border-[#26272c] text-[#222]">
          <Icon size="size-2.5" className="stroke-[1.500]">{icons.hex}</Icon>
        </div>
        <span className="absolute top-0 left-[44%] flex h-[15px] w-[93px] items-center justify-center gap-1.5 bg-[#0b0b0d] font-semibold whitespace-nowrap">
          <span>vie 30 Mayo '25</span>
          <span>07:10</span>
        </span>
      </div>
    </section>
  );
}

/* ---------- Barras inferiores ---------- */

function ReplayBar() {
  return (
    <div className="relative flex h-[33px] shrink-0 items-center justify-center border-b border-[#2c2c2c] bg-[#0f0f0f] text-[9px] font-semibold text-[#cfcfcf]">
      <button className="flex items-center gap-1">
        <Icon size="size-3.5">
          <path d="M3 2.500v13M5 2.500v13" strokeWidth="1.600" />
          <path d="M8 9h8M11 6 8 9l3 3" />
        </Icon>
        <span>Seleccionar la barra</span>
      </button>
      <button aria-label="Opciones" className="mx-2">
        <Icon size="size-2.5">{icons.down}</Icon>
      </button>
      <Separator />
      <button aria-label="Reproducir" className="mr-3 ml-3"><Icon size="size-3.5">{icons.play}</Icon></button>
      <button aria-label="Adelante" className="mr-2.5"><Icon size="size-3.5">{icons.step}</Icon></button>
      <button className="mr-3">10x</button>
      <button className="mr-3">5m</button>
      <Separator />
      <button aria-label="Ir al final" className="ml-2.5"><Icon size="size-3.5">{icons.toEnd}</Icon></button>
      <button aria-label="Salir" className="absolute right-4 text-[#e0e0e0]">
        <Icon size="size-3.5">{icons.close}</Icon>
      </button>
    </div>
  );
}

function RangeBar() {
  const ranges = ["1D", "5D", "1M", "3M", "6M", "YTD", "1A", "5A", "Todos"];
  return (
    <div className="flex h-[26px] shrink-0 items-center bg-[#0f0f0f] pr-1.5 pl-2.5 text-[9px] font-semibold text-[#cfcfcf]">
      <div className="flex gap-1.5">
        {ranges.map((range) => (
          <button key={range}>{range}</button>
        ))}
      </div>
      <span className="ml-[9px] h-4 w-px bg-[#3d3d3d]" />
      <button aria-label="Ir a fecha" className="ml-2"><Icon size="size-3.5">{icons.goto}</Icon></button>
      <button className="ml-auto">22:27:43 UTC-5</button>
    </div>
  );
}

function TradingPanel() {
  return (
    <div className="mt-[3px] flex h-[25px] shrink-0 items-center bg-[#1f1f1f] text-[9px] font-semibold text-[#d4d4d4]">
      <div className="flex h-full w-[164px] items-center bg-[#0f0f0f] pl-[5px]">
        <span className="relative flex size-4 items-center justify-center rounded bg-[#f2f2f2] text-black">
          <Icon size="size-2.5" className="fill-black">{icons.rewind}</Icon>
          <span className="absolute -top-0.5 -right-0.5 size-1 rounded-full bg-[#2fa37a]" />
        </span>
        <button className="ml-1.5 w-[86px] text-left whitespace-nowrap">Reproducir trading</button>
        <button className="h-[17px] w-[46px] rounded-[3px] border border-[#3b3b3b]">Operar</button>
      </div>
      <button className="ml-2">Panel de trading</button>
      <div className="ml-auto flex gap-3 pr-1.5">
        <button aria-label="Expandir"><Icon size="size-3">{icons.up}</Icon></button>
        <button aria-label="Maximizar">
          <Icon size="size-3"><path d="M5 2H2v4M13 2h3v4M16 12v4h-3M5 16H2v-4M7 2h4M7 16h4" /></Icon>
        </button>
      </div>
    </div>
  );
}

/* ---------- Barra de tareas ---------- */

interface TaskItemProps {
  label: string;
  active?: boolean;
  running?: boolean;
  children: ReactNode;
}

function TaskItem({ label, active, running, children }: TaskItemProps) {
  return (
    <button
      aria-label={label}
      className={clsx(
        "relative flex h-7 w-[29px] shrink-0 items-center justify-center rounded",
        active && "bg-[#2c2c2c]"
      )}
    >
      {children}
      {(active || running) && (
        <span
          className={clsx(
            "absolute bottom-0 h-[2px] rounded-full",
            active ? "w-2.5 bg-[#e0707c]" : "w-1 bg-[#999]"
          )}
        />
      )}
    </button>
  );
}

function Taskbar() {
  return (
    <footer className="grid h-8 shrink-0 grid-cols-[1fr_auto_1fr] items-center border-t border-[#333] bg-[#1b1b1b] text-[8px] text-[#dcdcdc]">
      <button className="flex items-center gap-1 pl-3 text-left leading-[10px]">
        <span className="relative">
          <svg viewBox="0 0 18 18" className="size-[18px]" aria-hidden="true">
            <circle cx="7" cy="9" r="5" fill="#e89a4f" />
            <path d="M4 17a4 4 0 0 1 0-7 5 5 0 0 1 9 1 3 3 0 0 1 1 6z" fill="#bcd0f4" />
          </svg>
          <span className="absolute -top-0.5 left-2 flex size-2.5 items-center justify-center rounded-full bg-[#ee6b78] text-[7px] text-[#3a1014]">2</span>
        </span>
        <span>
          23°C
          <span className="block">Mayorm. nublado</span>
        </span>
      </button>
      <div className="flex items-center">
        <TaskItem label="Inicio">
          <svg viewBox="0 0 16 16" className="size-4" fill="#45bdf3">
            <path d="M0 0h7.600v7.600H0zM8.400 0H16v7.600H8.400zM0 8.400h7.600V16H0zM8.400 8.400H16V16H8.400z" />
          </svg>
        </TaskItem>
        <label className="mx-[3px] flex h-[22px] w-[145px] items-center gap-1.5 rounded-full bg-[#3a3a3a] pl-[7px]">
          <Icon size="size-[11px]" className="stroke-[2]">{icons.search}</Icon>
          <input placeholder="Buscar" aria-label="Buscar" className="w-0 flex-1 bg-transparent text-[9px] text-[#ccc] outline-none placeholder:text-[#b8b8b8]" />
          <svg viewBox="0 0 32 20" className="mr-0.5 h-5 w-8" aria-hidden="true">
            <ellipse cx="16" cy="10" rx="14" ry="8" fill="#46396f" />
            <path d="M3 10C6 2 20 0 28 8l-8 5z" fill="#5fb39a" />
            <path d="M8 7c3-3 8-4 12-2l-5 5z" fill="#a778bf" />
            <path d="M1 17 9 11l5 3 6-5 11 8z" fill="#15205e" />
            <circle cx="18" cy="7" r="2" fill="#f0b98a" />
          </svg>
        </label>
        <TaskItem label="Vista de tareas">
          <svg viewBox="0 0 18 16" className="h-3.5 w-4"><path d="M1 6h10v9H1z" fill="#777" /><path d="M6 1h11v11H6z" fill="#e4e4e4" /></svg>
        </TaskItem>
        <TaskItem label="Copilot">
          <svg viewBox="0 0 18 18" className="size-4" fill="none" strokeWidth="4" strokeLinecap="round">
            <path d="M10 3H7C5 3 4 11 3 13" stroke="#2f8fe8" />
            <path d="M11 3c3 0 1 4 1 5" stroke="#4fc3d8" />
            <path d="M15 5c0 2-2 10-4 10H8" stroke="#d855a0" />
            <path d="M7 15c-3 0-1-4-1-5" stroke="#f0a63c" />
          </svg>
        </TaskItem>
        <TaskItem label="Explorador">
          <svg viewBox="0 0 18 16" className="h-4 w-[18px]">
            <path d="M1 2h6l2 2h8v11H1z" fill="#e9a823" />
            <path d="M1 6h16v9H1z" fill="#fbd34f" />
            <path d="M4 10h10v5H4z" fill="#2b76c9" />
          </svg>
        </TaskItem>
        <TaskItem label="Store">
          <svg viewBox="0 0 18 18" className="size-[18px]">
            <path d="M6 5V2h6v3" fill="none" stroke="#4cb6ea" strokeWidth="1.500" />
            <rect x="1" y="4.500" width="16" height="12.500" rx="2" fill="#eee" />
            <path d="M6 7.500h2.700v2.700H6z" fill="#e8503a" />
            <path d="M9.300 7.500H12v2.700H9.300z" fill="#74b62e" />
            <path d="M6 10.800h2.700v2.700H6z" fill="#2b8fe0" />
            <path d="M9.300 10.800H12v2.700H9.300z" fill="#f3b51f" />
          </svg>
        </TaskItem>
        <TaskItem label="Brave" running>
          <svg viewBox="0 0 18 18" className="size-4" aria-hidden="true">
            <path d="M5 1h8l3 3-.5 7L9 17.500 2.500 11 2 4z" fill="#e5432f" />
            <path d="m4.500 5.500 3 .5L9 5l1.500 1 3-.5-1 4.500L9 14.500 5.500 10z" fill="#fff" />
            <path d="m6.500 8 1.500.5M11.500 8l-1.500.5M9 9v1.500l-1.500 1M9 10.500l1.500 1" stroke="#e5432f" fill="none" />
          </svg>
        </TaskItem>
        <TaskItem label="TradingView" active>
          <span className="flex size-4 items-center justify-center rounded bg-black text-white">
            <TradingViewMark className="h-2 w-3.5" />
          </span>
        </TaskItem>
        <TaskItem label="Finanzas">
          <svg viewBox="0 0 18 18" className="size-4">
            <circle cx="5.500" cy="12" r="4.500" fill="#3a8fd0" />
            <circle cx="12.500" cy="12" r="4.500" fill="#e2b93b" />
            <circle cx="9" cy="6" r="5" fill="#7dbb49" />
            <circle cx="9" cy="10.500" r="4" fill="#e8e2a0" />
            <path d="M10.500 9c-3-1-3 1.500-1.500 1.500s1.500 2.500-1.500 1.500M9 8v5" stroke="#444" fill="none" />
          </svg>
        </TaskItem>
        <TaskItem label="WhatsApp" running>
          <SiWhatsapp className="size-4 text-[#35c95f]" />
          <span className="absolute top-0.5 right-0.5 flex size-2.5 items-center justify-center rounded-full bg-[#ee6055] text-[8px] leading-none text-[#2a0b0b]">5</span>
        </TaskItem>
        <TaskItem label="Notion">
          <SiNotion className="size-3.5 text-[#eee]" />
        </TaskItem>
        <TaskItem label="Telegram">
          <SiTelegram className="size-4 rounded-full bg-white text-[#33a5dc]" />
        </TaskItem>
        <TaskItem label="Chrome">
          <svg viewBox="0 0 18 18" className="size-4">
            <path d="M9 9h7.800V4.500A9 9 0 0 1 9 18z" fill="#f8c42c" />
            <path d="M9 9v9A9 9 0 0 1 1.200 4.500z" fill="#33a553" />
            <path d="M9 9 1.200 4.500a9 9 0 0 1 15.600 0L9 5z" fill="#e0412f" />
            <circle cx="9" cy="9" r="4.200" fill="#fff" />
            <circle cx="9" cy="9" r="3.200" fill="#3d80ea" />
          </svg>
        </TaskItem>
        <TaskItem label="OBS" running>
          <SiObsstudio className="size-4 text-[#c4c4c4]" />
          <span className="absolute top-[3px] right-[3px] size-2 rounded-full bg-[#e5101c]" />
        </TaskItem>
        <TaskItem label="Spotify" running>
          <SiSpotify className="size-4 text-[#2bd564]" />
        </TaskItem>
      </div>
      <div className="flex items-center justify-end pr-3">
        <button aria-label="Iconos ocultos" className="mr-[11px]"><Icon size="size-2.5" className="stroke-[2]">{icons.up}</Icon></button>
        <svg viewBox="0 0 14 10" className="mr-3 h-2 w-3 shrink-0" fill="#d6d6d6"><path d="M3 10a3 3 0 0 1 0-6 4 4 0 0 1 7.500 0A3 3 0 0 1 11 10z" /></svg>
        <svg viewBox="0 0 10 14" className="mr-4 h-3 w-2 shrink-0" fill="none" stroke="#c79c80"><rect x="3" y="1" width="4" height="7" rx="2" /><path d="M1 6c0 5 8 5 8 0M5 10v3" /></svg>
        <button className="mr-3 text-center leading-[10px]">ESP<span className="block">LAA</span></button>
        <Icon size="size-3" className="mr-1 stroke-[1.500]"><path d="M1.500 7c4-4.500 11-4.500 15 0M4 10c3-3 7-3 10 0M7 13c1-1 3-1 4 0" /></Icon>
        <Icon size="size-3" className="mr-1 stroke-[1.300]"><path d="M1.500 7h3L8 3.500v11L4.500 11h-3zM11 6.500c1.500 1.500 1.500 3.500 0 5M13.500 4c3 3 3 7 0 10" /></Icon>
        <svg viewBox="0 0 16 10" className="mr-3 h-2 w-3.5 shrink-0"><rect x=".5" y=".5" width="13" height="9" rx="2" fill="#e0ab22" stroke="#ddd" /><path d="M15 3v4" stroke="#ddd" /></svg>
        <button className="text-right leading-[10px]">22:27<span className="block">19/01/2026</span></button>
      </div>
    </footer>
  );
}

export default function App() {
  return (
    <div className="flex min-h-screen flex-col overflow-hidden bg-[#2b2b2b] font-['Open_Sans','Noto_Sans',sans-serif]">
      <TabBar />
      <TopToolbar />
      <div className="flex flex-1 gap-0.5 pt-0.5">
        <DrawingSidebar />
        <main className="flex min-w-0 flex-1 flex-col">
          <Chart />
          <ReplayBar />
          <RangeBar />
          <TradingPanel />
        </main>
        <WidgetSidebar />
      </div>
      <Taskbar />
    </div>
  );
}
